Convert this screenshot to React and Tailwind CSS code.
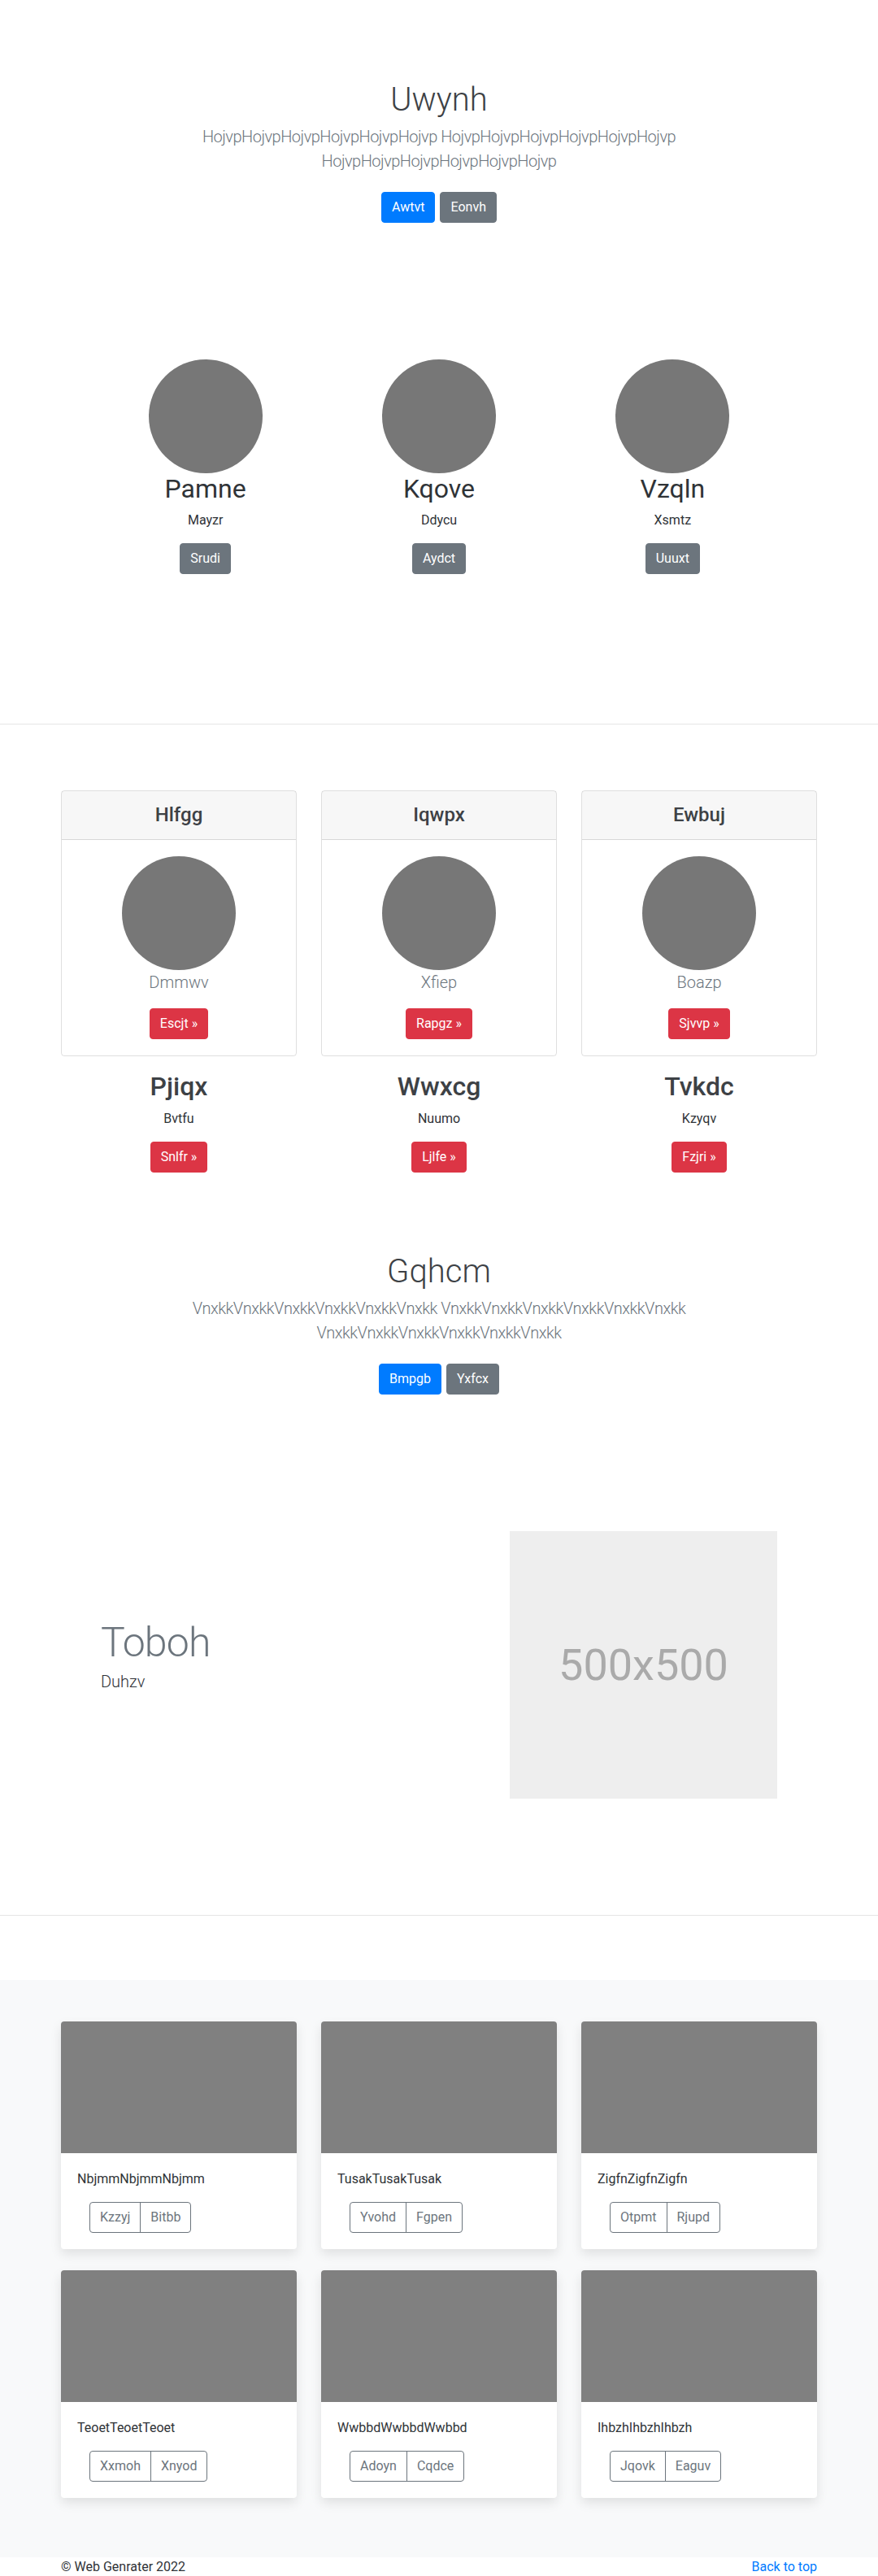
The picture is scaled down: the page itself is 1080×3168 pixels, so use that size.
import React from 'react';

const team = [
  { name: 'Pamne', role: 'Mayzr', cta: 'Srudi' },
  { name: 'Kqove', role: 'Ddycu', cta: 'Aydct' },
  { name: 'Vzqln', role: 'Xsmtz', cta: 'Uuuxt' },
];

const plans = [
  { title: 'Hlfgg', caption: 'Dmmwv', cta: 'Escjt' },
  { title: 'Iqwpx', caption: 'Xfiep', cta: 'Rapgz' },
  { title: 'Ewbuj', caption: 'Boazp', cta: 'Sjvvp' },
];

const features = [
  { title: 'Pjiqx', caption: 'Bvtfu', cta: 'Snlfr' },
  { title: 'Wwxcg', caption: 'Nuumo', cta: 'Ljlfe' },
  { title: 'Tvkdc', caption: 'Kzyqv', cta: 'Fzjri' },
];

const albums = [
  { text: 'NbjmmNbjmmNbjmm', a: 'Kzzyj', b: 'Bitbb' },
  { text: 'TusakTusakTusak', a: 'Yvohd', b: 'Fgpen' },
  { text: 'ZigfnZigfnZigfn', a: 'Otpmt', b: 'Rjupd' },
  { text: 'TeoetTeoetTeoet', a: 'Xxmoh', b: 'Xnyod' },
  { text: 'WwbbdWwbbdWwbbd', a: 'Adoyn', b: 'Cqdce' },
  { text: 'IhbzhIhbzhIhbzh', a: 'Jqovk', b: 'Eaguv' },
];

const btnBase = 'inline-block rounded-[4px] border px-3 py-1.5 text-base leading-6 text-white';

const Hero = ({ title, word, primary, secondary, className }) => (
  <section className={`text-center ${className}`}>
    <h1 className="mb-[6px] text-[40px] font-light leading-[1.2] text-[#3d4145]">{title}</h1>
    <p className="mx-auto mb-[23px] max-w-[720px] text-[20px] font-light leading-[30px] tracking-[-0.5px] text-[#6c757d]">
      {word.repeat(6)} {word.repeat(6)} {word.repeat(6)}
    </p>
    <div className="flex justify-center gap-[6px]">
      <a className={`${btnBase} border-[#007bff] bg-[#007bff]`}>{primary}</a>
      <a className={`${btnBase} border-[#6c757d] bg-[#6c757d]`}>{secondary}</a>
    </div>
  </section>
);

const Circle = () => <div className="h-[140px] w-[140px] rounded-full bg-[#777]" />;

export default function App() {
  return (
    <div className="min-h-[3168px] bg-white text-[#2f3337] [font-family:Roboto,'Liberation_Sans',sans-serif]">
      <Hero className="pt-[99px]" title="Uwynh" word="Hojvp" primary="Awtvt" secondary="Eonvh" />

      {/* marketing */}
      <div className="mx-auto mt-[168px] grid w-[862px] grid-cols-3">
        {team.map((m) => (
          <div key={m.name} className="flex flex-col items-center px-[15px] text-center">
            <Circle />
            <h2 className="mb-2 text-[32px] font-normal leading-[1.2]">{m.name}</h2>
            <p className="mb-4 text-base leading-6">{m.role}</p>
            <a className={`${btnBase} border-[#6c757d] bg-[#6c757d]`}>{m.cta}</a>
          </div>
        ))}
      </div>

      <hr className="mt-[184px] border-0 border-t border-[#e5e5e5]" />

      {/* plan cards */}
      <div className="mx-auto mt-[81px] grid w-[930px] grid-cols-3 gap-[30px]">
        {plans.map((p) => (
          <div key={p.title} className="rounded-[4px] border border-[rgba(0,0,0,0.125)] text-center">
            <div className="border-b border-[rgba(0,0,0,0.125)] bg-[rgba(0,0,0,0.03)] px-5 py-[15px]">
              <h4 className="text-[24px] font-medium leading-[1.2] text-[#3d4145]">{p.title}</h4>
            </div>
            <div className="flex flex-col items-center p-5">
              <Circle />
              <p className="text-[20px] font-light leading-[30px] text-[#6c757d]">{p.caption}</p>
              <a className={`${btnBase} mt-[17px] border-[#dc3545] bg-[#dc3545]`}>{p.cta} &raquo;</a>
            </div>
          </div>
        ))}
      </div>

      <div className="mx-auto mt-[18px] grid w-[960px] grid-cols-3">
        {features.map((f) => (
          <div key={f.title} className="flex flex-col items-center px-[15px] text-center">
            <h2 className="mb-2 text-[32px] font-medium leading-[1.2] text-[#3d4145]">{f.title}</h2>
            <p className="mb-4 text-base leading-6">{f.caption}</p>
            <a className={`${btnBase} border-[#dc3545] bg-[#dc3545]`}>{f.cta} &raquo;</a>
          </div>
        ))}
      </div>

      <Hero className="pt-[98px]" title="Gqhcm" word="Vnxkk" primary="Bmpgb" secondary="Yxfcx" />

      {/* featurette */}
      <div className="mx-auto mt-[168px] flex w-[862px] items-center">
        <div className="flex-1 px-[15px]">
          <h2 className="mb-2 text-[50px] font-light leading-none tracking-[-0.05rem] text-[#6c757d]">Toboh</h2>
          <p className="mb-4 text-[20px] font-light leading-[30px]">Duhzv</p>
        </div>
        <div className="w-[359px] px-[15px]">
          <div className="flex h-[329px] items-center justify-center bg-[#eee] text-[54px] text-[#aaa]">500x500</div>
        </div>
      </div>

      <hr className="mt-[143px] border-0 border-t border-[#e5e5e5]" />

      {/* album */}
      <div className="mt-[79px] bg-[#f8f9fa] pb-[73px] pt-[51px]">
        <div className="mx-auto grid w-[930px] grid-cols-3 gap-x-[30px] gap-y-[26px]">
          {albums.map((c) => (
            <div key={c.text} className="overflow-hidden rounded-[4px] bg-white shadow-[0_6px_14px_rgba(0,0,0,0.1)]">
              <div className="h-[162px] bg-[#808080]" />
              <div className="p-5">
                <p className="mb-4 text-base leading-6">{c.text}</p>
                <div className="ml-[15px] inline-flex rounded-[4px] border border-[#6c757d] text-base leading-6 text-[#6c757d]">
                  <span className="border-r border-[#6c757d] px-3 py-1.5">{c.a}</span>
                  <span className="px-3 py-1.5">{c.b}</span>
                </div>
              </div>
            </div>
          ))}
        </div>
      </div>

      <footer className="mx-auto flex w-[930px] justify-between text-base leading-6">
        <p>&copy; Web Genrater 2022</p>
        <a className="text-[#007bff]">Back to top</a>
      </footer>
    </div>
  );
}
